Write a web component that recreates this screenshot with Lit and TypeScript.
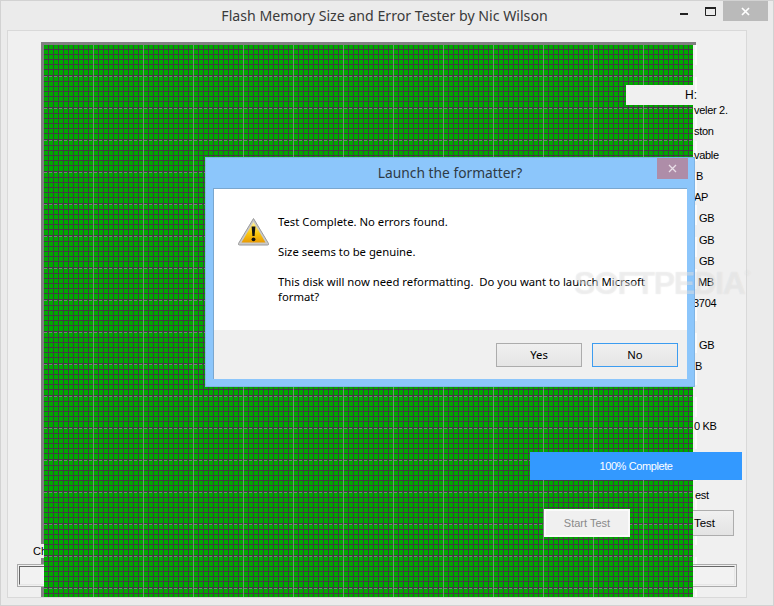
import { LitElement, html, css } from "lit";
import { customElement } from "lit/decorators.js";

const infoRows = [
  { text: "veler 2.", x: 3 },
  { text: "ston", x: 3 },
  { text: "vable", x: 3 },
  { text: "B", x: 5 },
  { text: "AP", x: 3 },
  { text: "GB", x: 8 },
  { text: "GB", x: 8 },
  { text: "GB", x: 8 },
  { text: "MB", x: 7 },
  { text: "3704", x: 2 },
  { text: "GB", x: 8 },
  { text: "B", x: 4 },
  { text: "0 KB", x: 3 },
  { text: "est", x: 4 },
];

@customElement("app-root")
export class AppRoot extends LitElement {
  static styles = css`
    :host {
      display: block;
      width: 774px;
      height: 606px;
      overflow: hidden;
    }
    * {
      box-sizing: border-box;
    }
    .window {
      width: 774px;
      height: 606px;
      display: flex;
      flex-direction: column;
      background: #ebebeb;
      border: 1px solid #d2d2d2;
      font-family: "Liberation Sans", Arial, sans-serif;
      color: #000;
    }
    .titlebar {
      height: 29px;
      flex: none;
      display: grid;
      grid-template-columns: 1fr auto 1fr;
      padding-right: 5px;
    }
    .title {
      grid-column: 2;
      font: 14.15px/29px "Noto Sans", sans-serif;
      color: #3a3a3a;
      white-space: nowrap;
    }
    .controls {
      grid-column: 3;
      justify-self: end;
      display: flex;
      height: 20px;
    }
    .ctl {
      width: 26px;
      height: 20px;
      display: flex;
      align-items: center;
      justify-content: center;
    }
    .ctl.close {
      width: 45px;
      background: #bababa;
    }
    .panel {
      position: relative;
      flex: 1;
      margin: 0 26px 7px 6px;
      background: #f0f0f0;
      border: 1px solid #d9d9d9;
    }
    .frame {
      position: absolute;
      left: 33px;
      top: 11px;
      width: 655px;
      bottom: 0;
      border-left: 3px solid #808080;
      border-top: 3px solid #808080;
    }
    .sliver {
      position: absolute;
      left: 687px;
      top: 14px;
      bottom: 0;
      width: 2px;
      background: repeating-linear-gradient(#fbfbfb 0 20px, #f0f0f0 20px 32px);
    }
    .info {
      position: absolute;
      left: 683px;
      top: 69px;
      display: grid;
      grid-template-rows: 21px 24px 21px 21px 21px 22px 21px 21px 21px 42px 21px 60px 69px 20px;
      font-size: 11px;
      letter-spacing: -0.3px;
      line-height: 20px;
      white-space: nowrap;
    }
    .cut-label {
      position: absolute;
      left: 25px;
      top: 513px;
      width: 12px;
      height: 14px;
      background: #f0f0f0;
      font-size: 11px;
      line-height: 14px;
      overflow: hidden;
      white-space: nowrap;
    }
    .field {
      position: absolute;
      top: 533px;
      height: 23px;
      background: #f0f0f0;
      border: 1px solid #ababab;
    }
    .field::after {
      content: "";
      position: absolute;
      inset: 1px;
      border: 1px solid #e6e6e6;
      border-top-color: #666;
      border-left-color: #666;
      background: #f2f2f2;
    }
    .field.left {
      left: 9px;
      width: 60px;
    }
    .field.right {
      left: 640px;
      width: 89px;
    }
    .btn-test {
      position: absolute;
      left: 620px;
      top: 479px;
      width: 106px;
      height: 26px;
      display: flex;
      align-items: center;
      justify-content: flex-end;
      padding-right: 18px;
      border: 1px solid #adadad;
      background: linear-gradient(#f0f0f0, #e3e3e3);
      font-size: 11.5px;
    }
    .grid {
      position: absolute;
      left: 36px;
      top: 14px;
      width: 649px;
      height: 552px;
      background-color: #00a800;
      background-image:
        linear-gradient(90deg, transparent 49px, #808080 49px),
        linear-gradient(90deg, transparent 4px, #443a46 4px),
        linear-gradient(
          transparent 4px, #443a46 4px 5px,
          transparent 5px 9px, #443a46 9px 10px,
          transparent 10px 14px, #443a46 14px 15px,
          transparent 15px 19px, #443a46 19px 20px,
          transparent 20px 24px, #443a46 24px 25px,
          transparent 25px 30px, #443a46 30px 31px,
          transparent 31px
        );
      background-size: 50px 100%, 5px 100%, 100% 32px;
    }
    .grid::before {
      content: "";
      position: absolute;
      inset: 0;
      background: linear-gradient(90deg, #7c7c7c 3px, transparent 3px) 0 0 / 5px 100%;
      -webkit-mask: linear-gradient(transparent 31px, #000 31px) 0 0 / 100% 32px;
      mask: linear-gradient(transparent 31px, #000 31px) 0 0 / 100% 32px;
    }
    .hbox {
      position: absolute;
      left: 618px;
      top: 54px;
      width: 69px;
      height: 20px;
      background: #f0f0f0;
      font-size: 12px;
      line-height: 20px;
      padding-left: 59px;
    }
    .progress {
      position: absolute;
      left: 522px;
      top: 421px;
      width: 212px;
      height: 28px;
      background: #3399ff;
      color: #fff;
      font-size: 11px;
      letter-spacing: -0.4px;
      line-height: 28px;
      text-align: center;
    }
    .btn-start {
      position: absolute;
      left: 536px;
      top: 478px;
      width: 86px;
      height: 28px;
      background: #f0f0f0;
      border: 2px solid #fafafa;
      color: #8a8a8a;
      font-size: 11px;
      line-height: 24px;
      text-align: center;
    }
    .dialog {
      position: absolute;
      left: 197px;
      top: 126px;
      width: 490px;
      height: 230px;
      display: flex;
      flex-direction: column;
      padding: 0 7px 7px;
      background: #8cc6fb;
      border: 1px solid #7fb4e4;
      font-family: "Noto Sans", sans-serif;
    }
    .dlg-title {
      flex: none;
      height: 30px;
      text-align: center;
      font-size: 13.8px;
      line-height: 30px;
      color: #2e3a46;
    }
    .dlg-close {
      position: absolute;
      right: 6px;
      top: 0;
      width: 31px;
      height: 21px;
      background: #ae8da8;
      display: flex;
      align-items: center;
      justify-content: center;
    }
    .dlg-inner {
      flex: 1;
      display: flex;
      flex-direction: column;
      background: #fff;
      border: 1px solid #7aa7cf;
      border-bottom: none;
      border-right: none;
    }
    .dlg-body {
      flex: 1;
      display: flex;
      align-items: flex-start;
      gap: 8px;
      padding: 25px 0 0 24px;
    }
    .dlg-icon {
      flex: none;
      margin-top: 3px;
    }
    .dlg-text {
      font-size: 11.3px;
      line-height: 15px;
      white-space: pre;
      color: #000;
    }
    .dlg-foot {
      flex: none;
      height: 49px;
      background: #f0f0f0;
      display: flex;
      justify-content: flex-end;
      align-items: flex-start;
      gap: 10px;
      padding: 13px 9px 0 0;
    }
    .dlg-btn {
      width: 86px;
      height: 24px;
      border: 1px solid #acacac;
      background: linear-gradient(#f0f0f0, #e5e5e5);
      font-size: 11.3px;
      line-height: 22px;
      text-align: center;
    }
    .dlg-btn.focus {
      border-color: #3c9cf0;
    }
    .mark {
      position: absolute;
      left: 566px;
      top: 234px;
      font: 700 32px/36px "Liberation Sans", sans-serif;
      letter-spacing: -1.4px;
      color: rgba(255, 255, 255, 0.35);
      text-shadow: 0 0 1px rgba(150, 150, 150, 0.25);
      white-space: nowrap;
    }
    .mark sup {
      font-size: 8px;
      font-weight: 400;
      line-height: 0;
      vertical-align: 18px;
      letter-spacing: 0;
    }
  `;

  render() {
    return html`
      <div class="window">
        <div class="titlebar">
          <div class="title">Flash Memory Size and Error Tester by Nic Wilson</div>
          <div class="controls">
            <div class="ctl">
              <svg width="9" height="10" viewBox="0 0 9 10"><rect y="7" width="8" height="2" fill="#222"></rect></svg>
            </div>
            <div class="ctl">
              <svg width="11" height="9" viewBox="0 0 11 9">
                <path d="M.5 1.5h10v7H.5z" fill="none" stroke="#222"></path>
                <rect width="11" height="2" fill="#222"></rect>
              </svg>
            </div>
            <div class="ctl close">
              <svg width="9" height="9" viewBox="0 0 9 9"><path d="M1 1l7 7M8 1L1 8" stroke="#fff" stroke-width="1.7"></path></svg>
            </div>
          </div>
        </div>
        <div class="panel">
          <div class="frame"></div>
          <div class="sliver"></div>
          <div class="info">
            ${infoRows.map((r) => html`<div style="padding-left:${r.x}px">${r.text}</div>`)}
          </div>
          <div class="cut-label">Ch</div>
          <div class="field left"></div>
          <div class="field right"></div>
          <div class="btn-test">Test</div>
          <div class="grid"></div>
          <div class="hbox">H:</div>
          <div class="progress">100% Complete</div>
          <div class="btn-start">Start Test</div>
          <div class="dialog">
            <div class="dlg-title">Launch the formatter?</div>
            <div class="dlg-close">
              <svg width="9" height="9" viewBox="0 0 9 9"><path d="M1 1l7 7M8 1L1 8" stroke="#eadfe8" stroke-width="1.3"></path></svg>
            </div>
            <div class="dlg-inner">
              <div class="dlg-body">
                <svg class="dlg-icon" width="32" height="29" viewBox="0 0 32 29">
                  <defs>
                    <linearGradient id="warn" x1="0" y1="0" x2="0" y2="1">
                      <stop offset="0" stop-color="#fff3a0"></stop>
                      <stop offset="0.55" stop-color="#fbc80e"></stop>
                      <stop offset="1" stop-color="#e89a05"></stop>
                    </linearGradient>
                  </defs>
                  <path d="M15.5 1.5 L30.5 26.5 Q31 28 29.5 28 H1.5 Q0 28 .5 26.5 Z" fill="#c9c9c9" stroke="#9a9a9a" stroke-linejoin="round"></path>
                  <path d="M15.5 5 L27.5 25.5 H3.5 Z" fill="url(#warn)"></path>
                  <path d="M13.6 9.5 h3.8 L16.6 19 h-2.2 Z" fill="#111"></path>
                  <circle cx="15.5" cy="22.3" r="1.9" fill="#111"></circle>
                </svg>
                <div class="dlg-text">Test Complete. No errors found.

Size seems to be genuine.

This disk will now need reformatting.  Do you want to launch Micrsoft
format?</div>
              </div>
              <div class="dlg-foot">
                <div class="dlg-btn">Yes</div>
                <div class="dlg-btn focus">No</div>
              </div>
            </div>
          </div>
          <div class="mark">SOFTPEDIA<sup>®</sup></div>
        </div>
      </div>
    `;
  }
}
